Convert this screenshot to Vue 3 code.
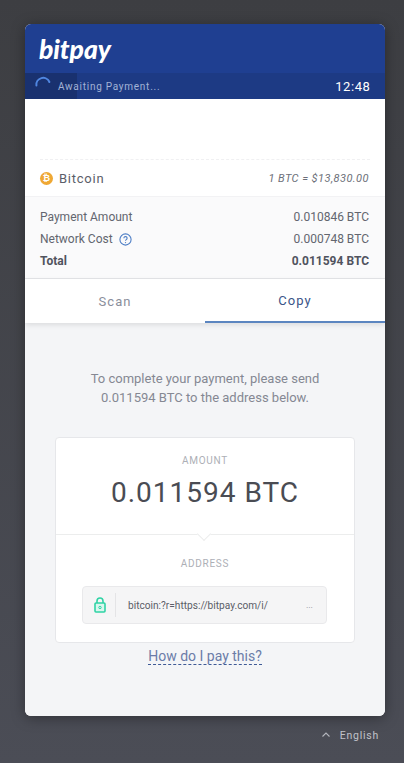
<script setup>
const rows = [
  { label: 'Payment Amount', value: '0.010846 BTC' },
  { label: 'Network Cost', value: '0.000748 BTC', help: true },
  { label: 'Total', value: '0.011594 BTC', total: true },
]
</script>

<template>
  <div class="page">
    <main class="card">
      <header class="head">
        <div class="logo">bitpay</div>
      </header>
      <div class="status">
        <div class="progress"></div>
        <div class="status-left">
          <svg class="spinner" width="16" height="16" viewBox="0 0 16 16" fill="none">
            <path d="M1.4 9.5A6.8 6.8 0 0 1 14.4 6" stroke="#4f86e0" stroke-width="2" stroke-linecap="round" />
          </svg>
          <span class="await">Awaiting Payment...</span>
        </div>
        <span class="time">12:48</span>
      </div>
      <div class="blank"><div class="dash"></div></div>
      <div class="currency">
        <div class="cur-left">
          <span class="coin">₿</span>
          <span class="cur-name">Bitcoin</span>
        </div>
        <span class="rate">1 BTC = $13,830.00</span>
      </div>
      <section class="lines">
        <div v-for="r in rows" :key="r.label" class="line" :class="{ total: r.total }">
          <span class="line-label">
            {{ r.label }}
            <svg v-if="r.help" class="help" width="13" height="13" viewBox="0 0 13 13" fill="none">
              <circle cx="6.5" cy="6.5" r="5.6" stroke="#4f7fc6" stroke-width="1.1" />
              <path d="M4.9 5.2a1.6 1.6 0 1 1 2.4 1.4c-.6.4-.8.6-.8 1.2" stroke="#4f7fc6" stroke-width="1.1" />
              <circle cx="6.5" cy="9.6" r=".7" fill="#4f7fc6" />
            </svg>
          </span>
          <span>{{ r.value }}</span>
        </div>
      </section>
      <nav class="tabs">
        <div class="tab">Scan</div>
        <div class="tab active">Copy</div>
      </nav>
      <section class="body">
        <p class="intro">To complete your payment, please send<br />0.011594 BTC to the address below.</p>
        <div class="box">
          <div class="amount">
            <div class="caption">AMOUNT</div>
            <div class="big">0.011594 BTC</div>
          </div>
          <div class="address">
            <span class="notch"></span>
            <div class="caption">ADDRESS</div>
            <div class="field">
              <span class="lock">
                <svg width="12" height="16" viewBox="0 0 12 16" fill="none">
                  <rect x="1" y="6" width="10" height="9" rx="1" stroke="#2fd3a5" stroke-width="1.6" fill="#d9f7ee" />
                  <path d="M3 6V4a3 3 0 0 1 6 0v2" stroke="#2fd3a5" stroke-width="1.6" />
                  <circle cx="6" cy="10.5" r="1.2" stroke="#2fd3a5" stroke-width="1" />
                </svg>
              </span>
              <span class="addr">bitcoin:?r=https://bitpay.com/i/</span>
              <span class="dots">...</span>
            </div>
          </div>
        </div>
        <a class="how">How do I pay this?</a>
      </section>
    </main>
    <footer class="foot">
      <svg width="8" height="5" viewBox="0 0 8 5" fill="none">
        <path d="M.5 4.5L4 1l3.5 3.5" stroke="#b4b6bd" stroke-width="1.1" />
      </svg>
      <span>English</span>
    </footer>
  </div>
</template>

<style>
html, body { margin: 0; background: #42444d; }
</style>

<style scoped>
.page {
  width: 404px;
  height: 763px;
  box-sizing: border-box;
  padding: 24px 19px 0 25px;
  background: linear-gradient(180deg, #3d3e42 0%, #4b4d56 100%);
  font-family: Roboto, "Liberation Sans", sans-serif;
  overflow: hidden;
}
.card {
  width: 360px;
  height: 692px;
  border-radius: 6px;
  overflow: hidden;
  display: flex;
  flex-direction: column;
  background: #fff;
  box-shadow: 0 2px 14px rgba(0, 0, 0, .35);
}
.head {
  height: 49px;
  background: #1f3f91;
  padding: 10px 0 0 14px;
  box-sizing: border-box;
}
.logo {
  color: #fff;
  font: italic 900 26.5px/30px Lato, Roboto, sans-serif;
  letter-spacing: -0.1px;
}
.status {
  position: relative;
  height: 26px;
  flex: none;
  background: #1d3a84;
  display: flex;
  align-items: center;
  justify-content: space-between;
  padding: 0 14.5px 0 10px;
  overflow: hidden;
}
.progress {
  position: absolute;
  left: 0;
  top: 0;
  bottom: 0;
  width: 52px;
  background: #19316f;
}
.status-left {
  position: relative;
  display: flex;
  align-items: center;
  gap: 7px;
}
.spinner { margin-top: -4px; }
.await {
  color: #a3b3d6;
  font-size: 10px;
  letter-spacing: .74px;
}
.time {
  position: relative;
  color: #fff;
  font-size: 13px;
  letter-spacing: .6px;
}
.blank {
  height: 61px;
  flex: none;
  box-sizing: border-box;
  padding: 60px 15px 0;
}
.dash { border-top: 1px dashed #f0f0f2; }
.currency {
  height: 37px;
  flex: none;
  display: flex;
  align-items: center;
  justify-content: space-between;
  padding: 1px 16px 0 15px;
  border-bottom: 1px solid #f2f2f4;
  box-sizing: border-box;
}
.cur-left {
  display: flex;
  align-items: center;
  gap: 6px;
}
.coin {
  width: 13px;
  height: 13px;
  border-radius: 50%;
  background: #efa834;
  color: #fff;
  font: 700 9px/13px "DejaVu Sans", sans-serif;
  text-align: center;
}
.cur-name {
  color: #5b5e69;
  font-size: 13px;
  letter-spacing: .75px;
}
.rate {
  color: #6c6f79;
  font-size: 11px;
  font-style: italic;
  letter-spacing: .45px;
}
.lines {
  height: 82px;
  flex: none;
  box-sizing: border-box;
  padding: 9px 16px 0 15px;
  background: #fafafb;
  border-bottom: 1px solid #e4e5e8;
}
.line {
  display: flex;
  justify-content: space-between;
  height: 22px;
  align-items: center;
  color: #63666f;
  font-size: 12px;
}
.line-label {
  display: flex;
  align-items: center;
  gap: 5px;
}
.total {
  color: #50535e;
  font-weight: 700;
}
.help { margin-left: 1px; }
.tabs {
  height: 44px;
  flex: none;
  display: grid;
  grid-template-columns: 180px 180px;
  position: relative;
  z-index: 1;
  background: #fff;
  box-shadow: 0 2px 5px rgba(0, 0, 0, .1);
}
.tab {
  display: flex;
  align-items: center;
  justify-content: center;
  color: #8a8e9b;
  font-size: 13px;
  letter-spacing: 1.1px;
  box-sizing: border-box;
}
.tab.active {
  color: #3b5488;
  border-bottom: 2px solid #5b85c0;
}
.body {
  flex: 1;
  background: #f4f5f7;
  padding: 46px 30px 0;
  display: flex;
  flex-direction: column;
  align-items: center;
}
.intro {
  margin: 0;
  color: #858893;
  font-size: 13px;
  line-height: 19px;
  letter-spacing: 0;
  text-align: center;
}
.box {
  margin-top: 30px;
  width: 300px;
  height: 206px;
  flex: none;
  box-sizing: border-box;
  background: #fff;
  border: 1px solid #e6e7ea;
  border-radius: 4px;
}
.amount {
  height: 97px;
  box-sizing: border-box;
  padding-top: 17px;
  border-bottom: 1px solid #eceded;
  text-align: center;
}
.caption {
  color: #adafb6;
  font-size: 10px;
  line-height: 12px;
  letter-spacing: .7px;
  text-align: center;
}
.big {
  margin-top: 9px;
  color: #4a4c53;
  font-size: 28px;
  line-height: 34px;
  letter-spacing: 1px;
}
.address {
  position: relative;
  padding-top: 23px;
}
.notch {
  position: absolute;
  left: 143px;
  top: -6px;
  width: 9px;
  height: 9px;
  background: #fff;
  transform: rotate(45deg);
  border-right: 1px solid #eceded;
  border-bottom: 1px solid #eceded;
}
.field {
  margin: 16px 27px 0 26px;
  height: 38px;
  box-sizing: border-box;
  display: flex;
  align-items: center;
  background: #f5f5f6;
  border: 1px solid #e9e9eb;
  border-radius: 4px;
}
.lock {
  width: 33px;
  height: 24px;
  flex: none;
  display: flex;
  align-items: center;
  justify-content: center;
  box-sizing: border-box;
  padding-left: 2px;
  border-right: 1px solid #e4e4e6;
}
.addr {
  margin-left: 12px;
  color: #5a5d66;
  font-size: 10.15px;
  flex: 1;
}
.dots {
  margin-right: 13px;
  color: #8c8e96;
  font-size: 9px;
}
.how {
  margin-top: 5px;
  color: #6b7ca8;
  font-size: 14px;
  line-height: 16px;
  border-bottom: 1px dashed #3e5a96;
}
.foot {
  display: flex;
  align-items: center;
  justify-content: flex-end;
  gap: 10px;
  margin: 13px 6px 0 0;
  color: #c0c2c9;
  font-size: 10.5px;
  letter-spacing: .75px;
}
.foot svg { margin-top: -3px; }
</style>
